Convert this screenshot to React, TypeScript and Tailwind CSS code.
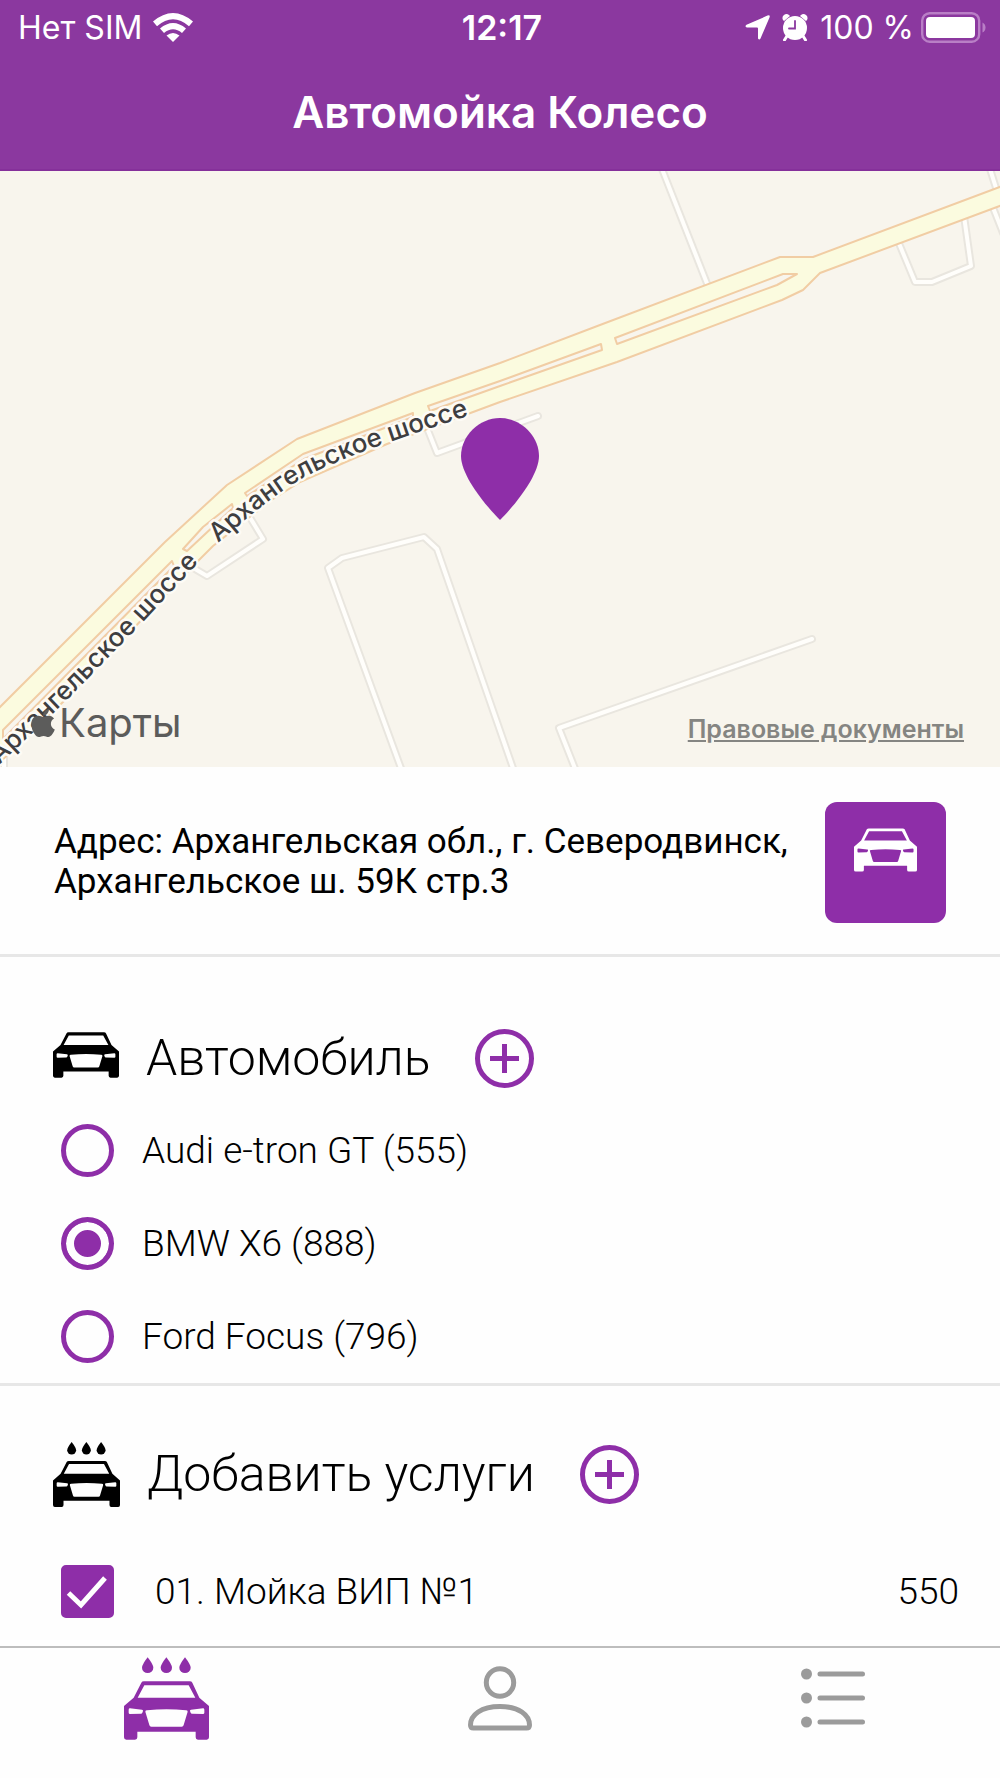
import { useState } from 'react'
import type { ReactNode } from 'react'
import { FaApple } from 'react-icons/fa'

const cars = [
  { id: 'audi', label: 'Audi e-tron GT (555)' },
  { id: 'bmw', label: 'BMW X6 (888)' },
  { id: 'ford', label: 'Ford Focus (796)' },
]

const services = [{ id: 'vip1', label: '01. Мойка ВИП №1', price: 550 }]

const carPath =
  'M52 76Q54 72 60 72H197Q203 72 205 76L226 121L255 146V240Q255 247 248 247H222Q215 247 215 240V223H40V240Q40 247 33 247H7Q0 247 0 240V146L29 121Z' +
  'M61 84L41 121H214L194 84Z' +
  'M14 157Q14 153 18 153L54 157Q58 158 57 161L55 166Q54 169 51 169L18 170Q14 170 14 166Z' +
  'M241 157Q241 153 237 153L201 157Q197 158 198 161L200 166Q201 169 204 169L237 170Q241 170 241 166Z' +
  'M64 163Q64 159 69 159Q128 153 186 159Q191 159 191 163L179 203Q178 208 173 208H82Q77 208 76 203Z'

function CarIcon({ className }: { className?: string }) {
  return (
    <svg viewBox="0 72 255 175" className={className} fill="currentColor" aria-hidden="true">
      <path fillRule="evenodd" d={carPath} />
    </svg>
  )
}

function CarWashIcon({ className }: { className?: string }) {
  return (
    <svg viewBox="0 0 255 247" className={className} fill="currentColor" aria-hidden="true">
      <path d="M71 0Q54 22 54 31A17 16 0 0 0 88 31Q88 22 71 0Z" />
      <path d="M127 0Q110 22 110 31A17 16 0 0 0 144 31Q144 22 127 0Z" />
      <path d="M183 0Q166 22 166 31A17 16 0 0 0 200 31Q200 22 183 0Z" />
      <path fillRule="evenodd" d={carPath} />
    </svg>
  )
}

function StatusBar() {
  return (
    <div className="grid h-[55px] grid-cols-3 items-center pl-[18px] pr-[14px] text-[32px] leading-none">
      <div className="flex items-center gap-[11px]">
        <span>Нет SIM</span>
        <svg viewBox="0 0 40 29" className="h-[29px] w-10" fill="currentColor" aria-hidden="true">
          <path d="M0 8.5Q20 -8.5 40 8.5L36 13.2Q20 -.8 4 13.2Z" />
          <path d="M7 15.5Q20 4.5 33 15.5L29 20Q20 12.5 11 20Z" />
          <path d="M13.5 22.5Q20 17.5 26.5 22.5L20 29Z" />
        </svg>
      </div>
      <span className="text-center text-[34px] font-semibold">12:17</span>
      <div className="flex items-center justify-end">
        <svg viewBox="0 0 25 25" className="mr-3 size-[25px]" fill="currentColor" aria-hidden="true">
          <path d="M22.500 .6Q25.500 -.5 24.500 2.500L15.500 23.500Q14.300 25.500 13 23.500V13.500Q13 12.500 12 12.500H2Q-.7 11.500 1.500 9.800Z" />
        </svg>
        <svg viewBox="0 0 26 27" className="mr-3 h-[27px] w-[26px]" aria-hidden="true">
          <path d="M1 6A4 4 0 0 1 7 1L8 2L2 7ZM25 6A4 4 0 0 0 19 1L18 2L24 7Z" fill="currentColor" />
          <path d="M5 22L2.500 26M21 22L23.500 26" stroke="currentColor" strokeWidth="3" strokeLinecap="round" />
          <circle cx="13" cy="14" r="12" fill="currentColor" />
          <path d="M13 7V14.500H7" fill="none" stroke="#8b389f" strokeWidth="1.800" strokeLinecap="round" />
        </svg>
        <span>100 %</span>
        <svg viewBox="0 0 65 31" className="ml-[7px] h-[31px] w-[65px]" aria-hidden="true">
          <rect x="1.200" y="1.200" width="57" height="28.500" rx="7.500" fill="none" stroke="#b97fc6" strokeWidth="2.400" />
          <rect x="5" y="5" width="49" height="21" rx="4" fill="#fff" />
          <path d="M61.500 10.500Q64.500 12 64.500 15.500T61.500 20.500Z" fill="#b97fc6" />
        </svg>
      </div>
    </div>
  )
}

const lanes = [
  'M662 -2L708 115',
  'M898 70L915 111H932L971 95L964 45',
  'M990 -2L997 20',
  'M992 34L1003 62',
  'M425 252L437 282L538 245',
  'M246 340L263 368L207 405L190 395',
  'M402 600L328 397L342 387L424 366L437 378L514 600',
  'M576 600L559 557L812 468',
  'M4 598V555',
]

const medians = [
  'M615 167L783 103H797L777 114L617 173Z',
  'M601 173L602 179L500 215L430 240L428 235L500 210Z',
  'M413 242L303 283L245 322L247 325L304 288L413 246Z',
  'M232 333L203 356L183 378L187 380L233 337Z',
  'M172 390L3 559V568L174 395Z',
]

function MapView() {
  return (
    <section className="relative h-[596px] overflow-hidden bg-[#f8f5ed]" aria-label="Карта">
      <svg viewBox="0 0 1000 596" preserveAspectRatio="xMidYMid slice" className="block size-full">
        <g fill="none" strokeLinecap="round" strokeLinejoin="round">
          {lanes.map((d) => (
            <path key={d} d={d} stroke="#e9e6df" strokeWidth="8" />
          ))}
          {lanes.map((d) => (
            <path key={d} d={d} stroke="#fffefb" strokeWidth="4" />
          ))}
        </g>
        <g stroke="#f1cda4" strokeWidth="2" strokeLinejoin="round">
          <path
            fill="#fbfbdf"
            d="M-5 541L165 371L227 314L297 268L415 222L500 192L600 154L780 86H813L1005 14V33L820 102L803 119L782 129L617 191L500 231L387 273L300 311L270 330L213 375L197 391L63 531L-5 596Z"
          />
          {medians.map((d) => (
            <path key={d} d={d} fill="#f8f5ed" />
          ))}
        </g>
        <path id="label-upper" fill="none" d="M218 372C248 347 278 319 313 302C350 284 395 268 490 238" />
        <path id="label-lower" fill="none" d="M-28 620L66 530L143 451L199 391" />
        <g
          className="font-[Inter,sans-serif] text-[26px] font-medium"
          fill="#3e3e40"
          stroke="#fdfbf6"
          strokeWidth="5"
          strokeLinejoin="round"
          paintOrder="stroke"
        >
          <text>
            <textPath href="#label-upper">Архангельское шоссе</textPath>
          </text>
          <text textAnchor="end">
            <textPath href="#label-lower" startOffset="100%">
              Архангельское шоссе
            </textPath>
          </text>
        </g>
        <path
          fill="#8e2ea8"
          d="M500 349C484 333 461 304 461 285C461 265 479 247 500 247S539 265 539 285C539 304 516 333 500 349Z"
        />
      </svg>
      <div className="absolute bottom-5 left-[27px] flex items-center text-[#5c5c5b]">
        <FaApple className="size-8" aria-hidden="true" />
        <span className="text-[40px] leading-[48px]">Карты</span>
      </div>
      <a
        href="#legal"
        className="absolute right-9 bottom-5 text-[25px] leading-9 font-semibold text-[#858582] underline"
      >
        Правовые документы
      </a>
    </section>
  )
}

function AddButton({ label }: { label: string }) {
  return (
    <button type="button" aria-label={label} className="size-[59px] text-[#8e2ea8]">
      <svg viewBox="0 0 59 59" className="size-full" fill="none" stroke="currentColor" strokeWidth="5">
        <circle cx="29.500" cy="29.500" r="27" />
        <path d="M29.500 15V44M15 29.500H44" />
      </svg>
    </button>
  )
}

function SectionTitle({ icon, title, addLabel }: { icon: ReactNode; title: string; addLabel: string }) {
  return (
    <div className="flex items-center">
      {icon}
      <h2 className="mr-[45px] ml-[27px] text-[50px] leading-[59px] font-light">{title}</h2>
      <AddButton label={addLabel} />
    </div>
  )
}

export default function App() {
  const [car, setCar] = useState('bmw')
  const [picked, setPicked] = useState<string[]>(['vip1'])

  const toggle = (id: string) =>
    setPicked((list) => (list.includes(id) ? list.filter((x) => x !== id) : [...list, id]))

  return (
    <div className="flex min-h-screen flex-col bg-[#fefefe] font-[Roboto,sans-serif] text-black">
      <header className="h-[171px] border-b-2 border-[#85309a] bg-[#8b389f] font-[Inter,sans-serif] text-white">
        <StatusBar />
        <h1 className="pt-[29px] text-center text-[44px] leading-[56px] font-semibold">Автомойка Колесо</h1>
      </header>

      <div className="font-[Inter,sans-serif]">
        <MapView />
      </div>

      <section className="flex h-[190px] items-center justify-between border-b-3 border-[#e7e7e7] px-[54px] pt-[3px]">
        <p className="text-[35px] leading-10">
          Адрес: Архангельская обл., г. Северодвинск,
          <br />
          Архангельское ш. 59К стр.3
        </p>
        <button
          type="button"
          aria-label="Маршрут"
          className="flex size-[121px] shrink-0 justify-center rounded-xl bg-[#8e2ea8] pt-[26px] text-white"
        >
          <CarIcon className="h-[44px] w-[63px]" />
        </button>
      </section>

      <section className="border-b-3 border-[#e7e7e7] pt-[72px] pr-[41px] pb-5 pl-[53px]">
        <SectionTitle
          icon={<CarIcon className="mb-2 h-[46px] w-[66px]" />}
          title="Автомобиль"
          addLabel="Добавить автомобиль"
        />
        <div className="flex flex-col gap-10 pt-9 pl-2">
          {cars.map((c) => (
            <label key={c.id} className="flex h-[53px] items-center gap-7 text-[37px] leading-[53px] font-light">
              <input
                type="radio"
                name="car"
                checked={car === c.id}
                onChange={() => setCar(c.id)}
                className="size-[53px] shrink-0 appearance-none rounded-full border-5 border-[#8e2ea8] checked:bg-[#8e2ea8] checked:shadow-[inset_0_0_0_8px_#fefefe]"
              />
              {c.label}
            </label>
          ))}
        </div>
      </section>

      <section className="pt-14 pr-[41px] pb-7 pl-[53px]">
        <SectionTitle
          icon={<CarWashIcon className="h-[65px] w-[67px]" />}
          title="Добавить услуги"
          addLabel="Добавить услугу"
        />
        <div className="pt-[58px] pl-2">
          {services.map((s) => (
            <label key={s.id} className="flex h-[53px] items-center text-[37px] leading-[53px] font-light">
              <span className="mr-[41px] grid size-[53px] shrink-0">
                <input
                  type="checkbox"
                  checked={picked.includes(s.id)}
                  onChange={() => toggle(s.id)}
                  className="peer col-start-1 row-start-1 size-[53px] appearance-none rounded-[5px] border-5 border-[#8e2ea8] checked:bg-[#8e2ea8]"
                />
                <svg
                  viewBox="0 0 53 53"
                  className="pointer-events-none invisible col-start-1 row-start-1 size-[53px] peer-checked:visible"
                  fill="none"
                  stroke="#fff"
                  strokeWidth="5"
                  aria-hidden="true"
                >
                  <path d="M7.500 28L20 40L44 13" />
                </svg>
              </span>
              <span className="flex-1">{s.label}</span>
              <span>{s.price}</span>
            </label>
          ))}
        </div>
      </section>

      <nav className="mt-auto grid h-[132px] grid-cols-3 justify-items-center border-t-2 border-[#bdbdbd] text-[#9b9b9b]">
        <a href="#wash" aria-label="Мойка" className="pt-[9px] text-[#8e2ea8]">
          <CarWashIcon className="h-[83px] w-[85px]" />
        </a>
        <a href="#profile" aria-label="Профиль" className="pt-[18px]">
          <svg viewBox="0 0 64 65" className="h-[65px] w-16" fill="none" stroke="currentColor" strokeWidth="5">
            <circle cx="32" cy="16.500" r="13.700" />
            <path
              strokeLinejoin="round"
              d="M2.500 59C2.500 49 13 40.500 32 40.500S61.500 49 61.500 59Q61.500 62 58.500 62H5.500Q2.500 62 2.500 59Z"
            />
          </svg>
        </a>
        <a href="#orders" aria-label="Заказы" className="pt-5">
          <svg viewBox="0 0 64 60" className="h-[60px] w-16" fill="currentColor">
            <circle cx="5.500" cy="6" r="5.500" />
            <circle cx="5.500" cy="30" r="5.500" />
            <circle cx="5.500" cy="54" r="5.500" />
            <path d="M19 6H61.500M19 30H61.500M19 54H61.500" stroke="currentColor" strokeWidth="5" strokeLinecap="round" />
          </svg>
        </a>
      </nav>
    </div>
  )
}
